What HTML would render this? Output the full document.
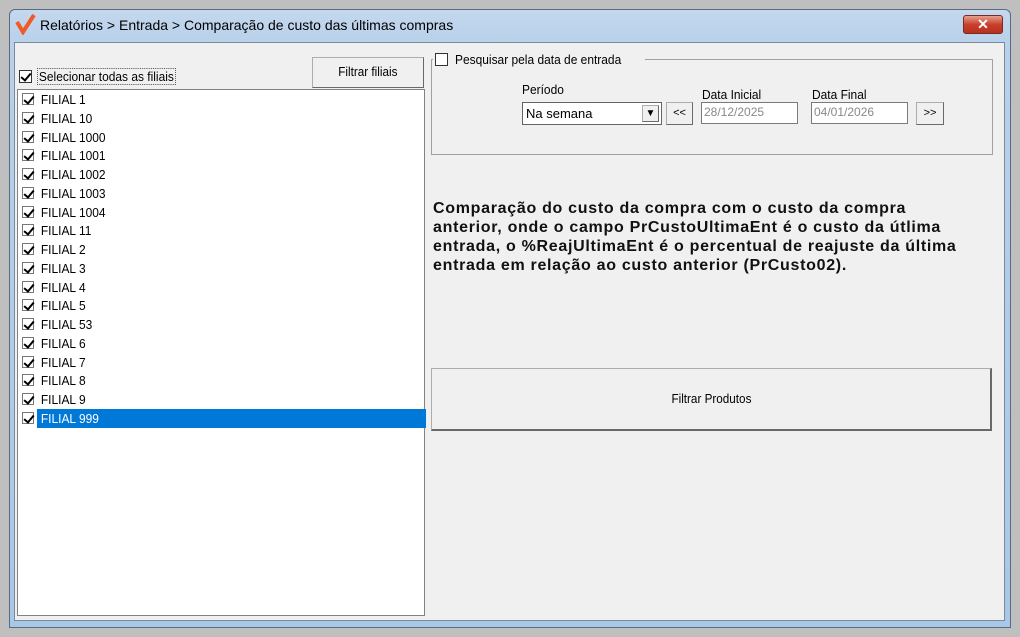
<!DOCTYPE html>
<html><head><meta charset="utf-8"><style>
*{margin:0;padding:0;box-sizing:border-box}
body{width:1020px;height:637px;background:#bfbfbf;font-family:"Liberation Sans",sans-serif;font-size:12px;color:#000;position:relative;overflow:hidden}
.abs{position:absolute}
.win{left:9px;top:9px;width:1002px;height:619px;background:linear-gradient(#c4d8ee,#b9d1ea 30px,#a9c7e6);border:1px solid #5a6a80;border-radius:6px 6px 0 0}
.client{left:14px;top:42px;width:991px;height:579px;background:#f0f0f0;border:1px solid #7a8a9a}
.cb{position:absolute;width:13px;height:13px;border:1px solid #333;background:#fff}
.cb.ck::after{content:"";position:absolute;left:3px;top:0px;width:4px;height:8px;border:solid #000;border-width:0 2px 2px 0;transform:rotate(40deg)}
.btn{position:absolute;background:#f0f0f0;border:1px solid #adadad;border-right-color:#696969;border-bottom-color:#696969;text-align:center}
.list{left:17px;top:89px;width:408px;height:527px;background:#fff;border:1px solid #828282}
.row{position:absolute;left:2px;height:19px;width:404px}
.row span{position:absolute;left:19px;top:2px;font-size:13px;padding:0 2px;transform:scaleX(.92);transform-origin:left}
.row .cb{left:2px;top:3px;width:12px;height:12px;border-color:#777}
.inp{position:absolute;background:#fff;border:1px solid #7a7a7a;font-size:12px;color:#888;padding:2px 2px}
</style></head><body>
<div class="abs win"></div>
<svg class="abs" style="left:15px;top:13px" width="22" height="22" viewBox="0 0 22 22"><path d="M2 9 L8 19 L19 2" stroke="#f05a28" stroke-width="4" fill="none"/></svg>
<div class="abs" style="left:40px;top:17px;font-size:14px;color:#000">Relatórios &gt; Entrada &gt; Comparação de custo das últimas compras</div>
<div class="abs" style="left:963px;top:15px;width:40px;height:19px;border-radius:3px;border:1px solid #7a2a20;background:linear-gradient(#e8a090,#c8402c 50%,#b83020);color:#fff;font-weight:bold;text-align:center;font-size:14px;line-height:17px">✕</div>
<div class="abs client"></div>
<div class="cb ck" style="left:19px;top:70px"></div>
<div class="abs" style="left:38px;top:69px;font-size:13px;outline:1px dotted #555;padding:0 1px;transform:scaleX(.92);transform-origin:left">Selecionar todas as filiais</div>
<div class="btn" style="left:312px;top:57px;width:112px;height:31px;line-height:28px;font-size:13px"><span style="display:inline-block;transform:scaleX(.9)">Filtrar filiais</span></div>
<div class="abs list">
<div class="row" style="top:0"><div class="cb ck"></div><span>FILIAL 1</span></div>
<div class="row" style="top:18.75px"><div class="cb ck"></div><span>FILIAL 10</span></div>
<div class="row" style="top:37.5px"><div class="cb ck"></div><span>FILIAL 1000</span></div>
<div class="row" style="top:56.25px"><div class="cb ck"></div><span>FILIAL 1001</span></div>
<div class="row" style="top:75px"><div class="cb ck"></div><span>FILIAL 1002</span></div>
<div class="row" style="top:93.75px"><div class="cb ck"></div><span>FILIAL 1003</span></div>
<div class="row" style="top:112.5px"><div class="cb ck"></div><span>FILIAL 1004</span></div>
<div class="row" style="top:131.25px"><div class="cb ck"></div><span>FILIAL 11</span></div>
<div class="row" style="top:150px"><div class="cb ck"></div><span>FILIAL 2</span></div>
<div class="row" style="top:168.75px"><div class="cb ck"></div><span>FILIAL 3</span></div>
<div class="row" style="top:187.5px"><div class="cb ck"></div><span>FILIAL 4</span></div>
<div class="row" style="top:206.25px"><div class="cb ck"></div><span>FILIAL 5</span></div>
<div class="row" style="top:225px"><div class="cb ck"></div><span>FILIAL 53</span></div>
<div class="row" style="top:243.75px"><div class="cb ck"></div><span>FILIAL 6</span></div>
<div class="row" style="top:262.5px"><div class="cb ck"></div><span>FILIAL 7</span></div>
<div class="row" style="top:281.25px"><div class="cb ck"></div><span>FILIAL 8</span></div>
<div class="row" style="top:300px"><div class="cb ck"></div><span>FILIAL 9</span></div>
<div class="row" style="top:318.75px"><div class="abs" style="left:17px;top:0;width:389px;height:19px;background:#0078d7"></div><div class="cb ck"></div><span style="color:#fff">FILIAL 999</span></div>
</div>
<div class="abs" style="left:431px;top:59px;width:562px;height:96px;border:1px solid #a0a0a0"></div>
<div class="abs" style="left:433px;top:50px;width:212px;height:18px;background:#f0f0f0"></div>
<div class="cb" style="left:435px;top:53px;border-color:#333"></div>
<div class="abs" style="left:455px;top:52px;font-size:13px;transform:scaleX(.92);transform-origin:left">Pesquisar pela data de entrada</div>
<div class="abs" style="left:522px;top:82px;font-size:13px;transform:scaleX(.92);transform-origin:left">Período</div>
<div class="abs" style="left:702px;top:87px;font-size:13px;transform:scaleX(.92);transform-origin:left">Data Inicial</div>
<div class="abs" style="left:812px;top:87px;font-size:13px;transform:scaleX(.92);transform-origin:left">Data Final</div>
<div class="inp" style="left:522px;top:102px;width:140px;height:23px;color:#000;font-size:13px;border-color:#646464;padding:3px 3px">Na semana</div>
<div class="btn" style="left:642px;top:105px;width:17px;height:17px;font-size:10px;line-height:16px">▼</div>
<div class="btn" style="left:666px;top:102px;width:27px;height:23px;line-height:20px;font-size:11px">&lt;&lt;</div>
<div class="inp" style="left:701px;top:102px;width:97px;height:22px">28/12/2025</div>
<div class="inp" style="left:811px;top:102px;width:97px;height:22px">04/01/2026</div>
<div class="btn" style="left:916px;top:102px;width:28px;height:23px;line-height:20px;font-size:11px">&gt;&gt;</div>
<div class="abs" style="left:433px;top:199px;white-space:nowrap;font-size:16px;letter-spacing:.7px;font-weight:bold;line-height:19px;color:#111">Comparação do custo da compra com o custo da compra<br>anterior, onde o campo PrCustoUltimaEnt é o custo da útlima<br>entrada, o %ReajUltimaEnt é o percentual de reajuste da última<br>entrada em relação ao custo anterior (PrCusto02).</div>
<div class="btn" style="left:431px;top:368px;width:561px;height:63px;line-height:60px;font-size:13px;border-width:1px 2px 2px 1px"><span style="display:inline-block;transform:scaleX(.9)">Filtrar Produtos</span></div>
</body></html>
